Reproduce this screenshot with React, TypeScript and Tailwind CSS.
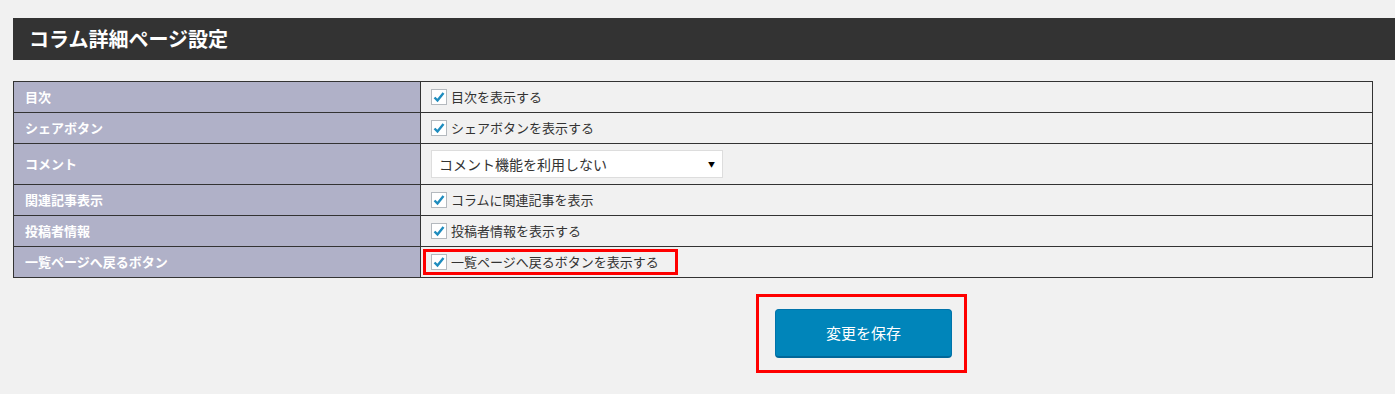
import React from 'react';

const font = { fontFamily: '"Noto Sans CJK JP", "Noto Sans", sans-serif' };

const Check = () => (
  <span className="w-4 h-4 bg-white border border-[#b4b9be] flex items-center justify-center shrink-0">
    <svg width="14" height="14" viewBox="0 0 14 14">
      <path d="M2.5 7.5 L5.5 10.5 L11.5 3" fill="none" stroke="#1e8cbe" strokeWidth="2.4" />
    </svg>
  </span>
);

const CheckRow = ({ label }: { label: string }) => (
  <label className="flex items-center gap-[4px] text-[13px] text-[#333]">
    <Check />
    <span>{label}</span>
  </label>
);

const rows = [
  { label: '目次', value: '目次を表示する' },
  { label: 'シェアボタン', value: 'シェアボタンを表示する' },
  { label: 'コメント', select: 'コメント機能を利用しない' },
  { label: '関連記事表示', value: 'コラムに関連記事を表示' },
  { label: '投稿者情報', value: '投稿者情報を表示する' },
  { label: '一覧ページへ戻るボタン', value: '一覧ページへ戻るボタンを表示する', marked: true },
];

export default function App() {
  return (
    <div className="min-h-[394px] bg-[#f1f1f1] pt-[18px] pl-[13px]" style={font}>
      <div className="h-[42px] bg-[#333333] flex items-center pl-[16px]">
        <h2 className="text-white text-[20px] font-bold leading-none">コラム詳細ページ設定</h2>
      </div>

      <div className="mt-[21px] w-[1360px] border border-[#333]">
        {rows.map((r, i) => (
          <div
            key={r.label}
            className={`grid grid-cols-[407px_1fr] ${i > 0 ? 'border-t border-[#333]' : ''} ${
              r.select ? 'h-[41px]' : i === 0 ? 'h-[30px]' : 'h-[31px]'
            }`}
          >
            <div className="bg-[#b0b1c8] border-r border-[#333] flex items-center pl-[11px] text-white text-[13px] font-bold">
              {r.label}
            </div>
            <div className="flex items-center pl-[10px]">
              {r.select ? (
                <div className="w-[292px] h-[28px] bg-white border border-[#ddd] flex items-center justify-between pl-[7px] pr-[7px] text-[14px] text-[#333]">
                  <span>{r.select}</span>
                  <span className="text-[7px] text-black">▼</span>
                </div>
              ) : r.marked ? (
                <div className="-ml-[8px] border-[3px] border-[#ff0000] pl-[5px] pr-[16px] h-[26px] flex items-center">
                  <CheckRow label={r.value!} />
                </div>
              ) : (
                <CheckRow label={r.value!} />
              )}
            </div>
          </div>
        ))}
      </div>

      <div className="mt-[16px] ml-[743px] w-[211px] h-[79px] border-[3px] border-[#ff0000] flex items-center pl-[16px]">
        <button className="w-[177px] h-[49px] bg-[#0085ba] border border-[#0073aa] border-b-2 border-b-[#006799] rounded-[4px] text-white text-[15px]">
          変更を保存
        </button>
      </div>
    </div>
  );
}
